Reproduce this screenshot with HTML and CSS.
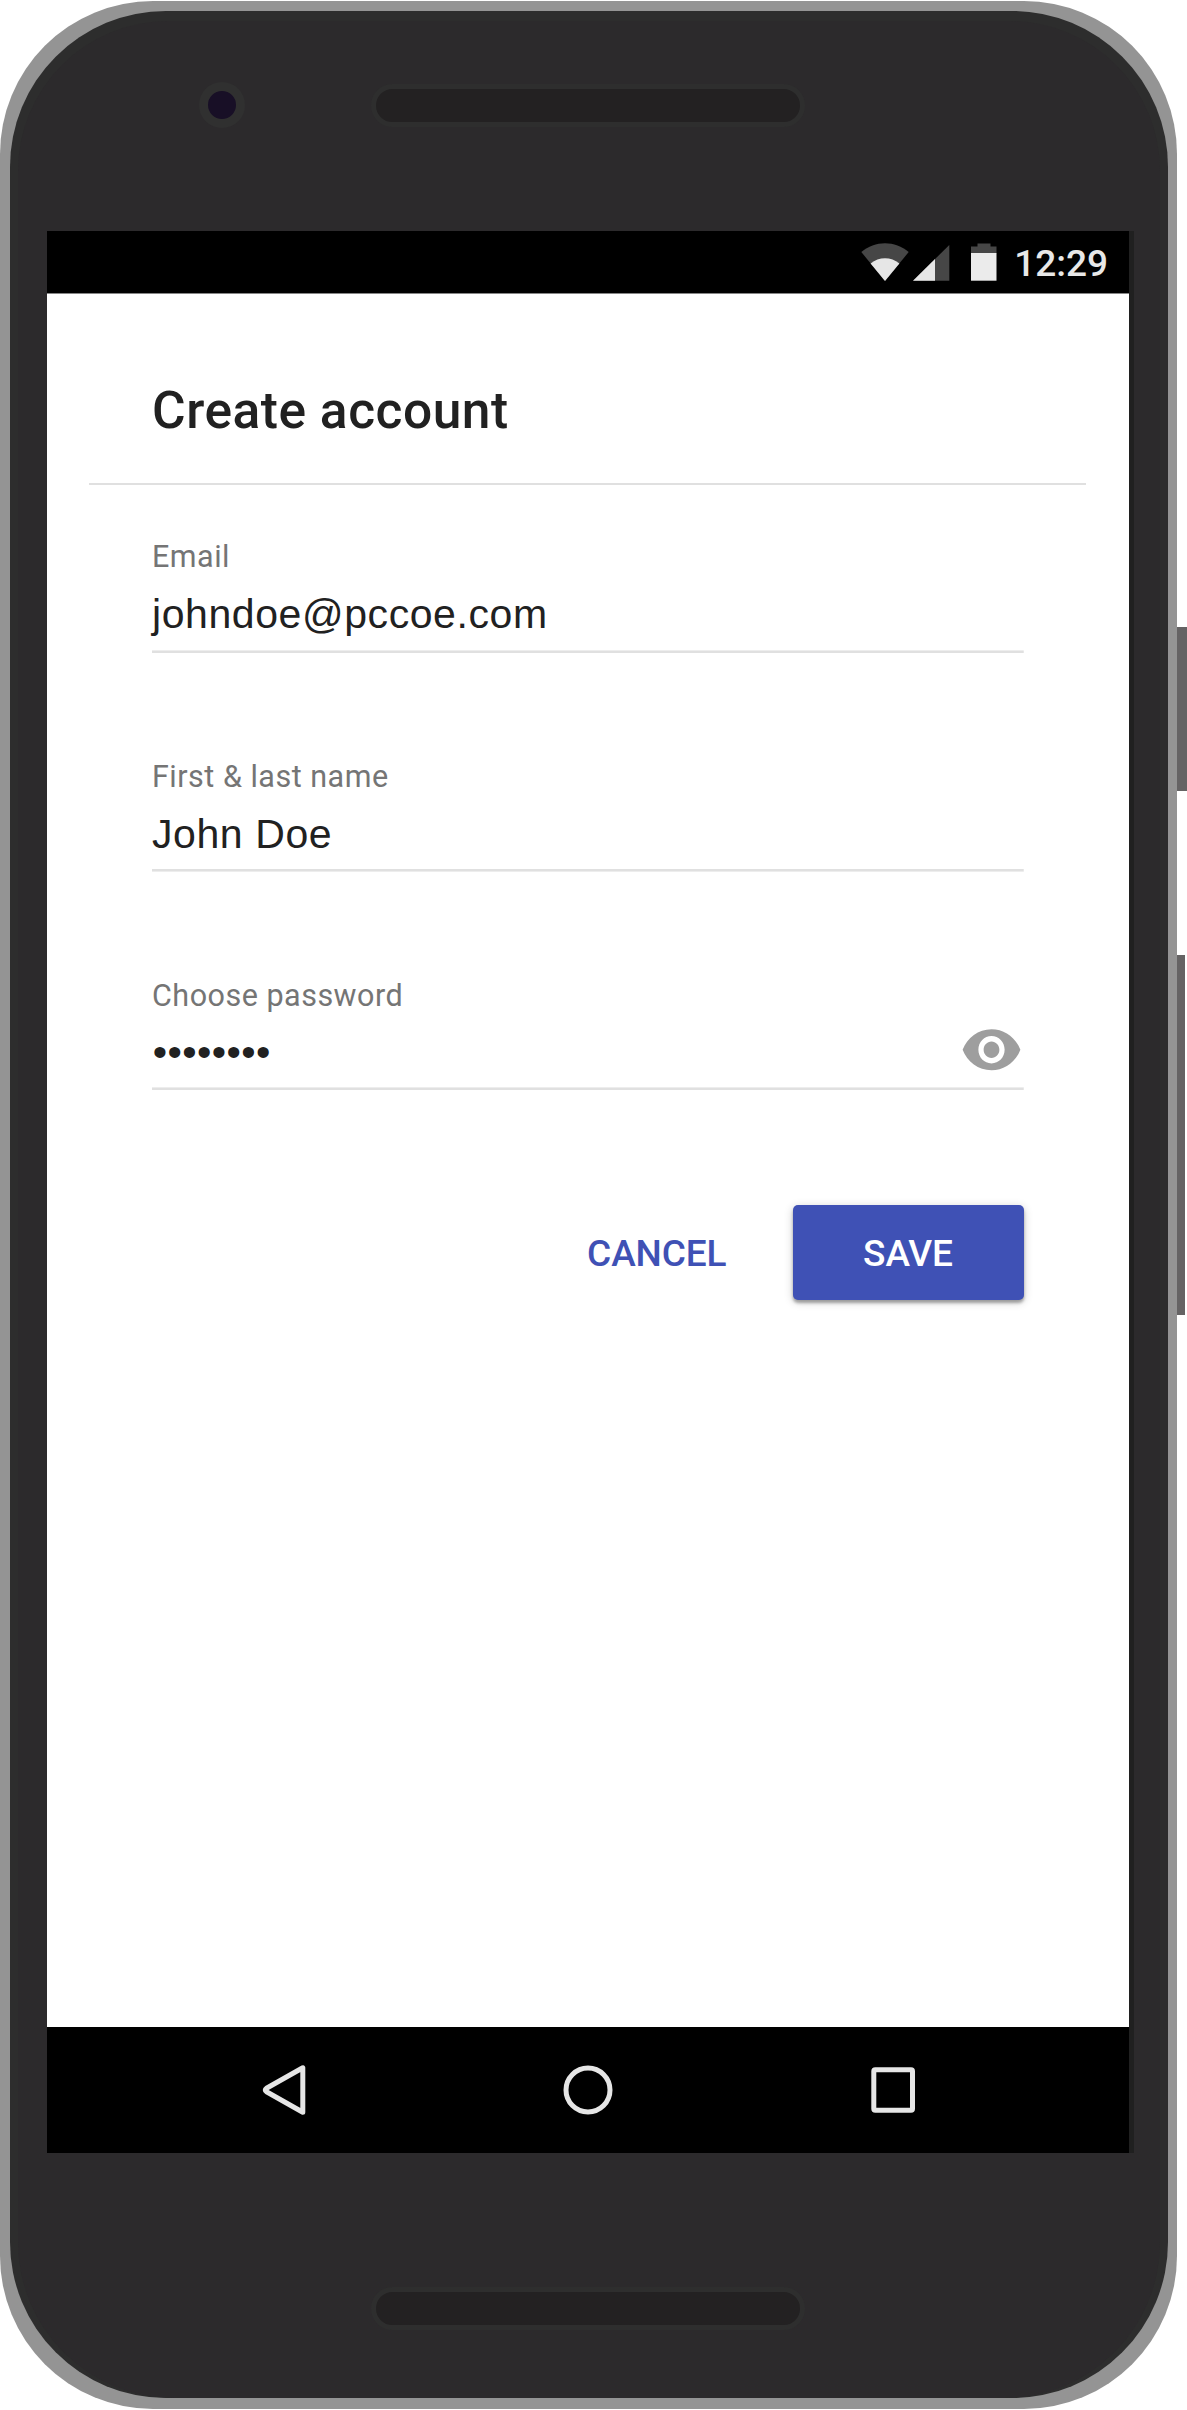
FILE: index.html
```
<!DOCTYPE html>
<html lang="en">
<head>
<meta charset="utf-8">
<title>Create account</title>
<link rel="stylesheet" href="styles.css">
</head>
<body>
<div class="phone">
  <div class="bezel">
    <div class="face">
      <div class="face-top">
        <span class="camera"></span>
        <span class="speaker"></span>
      </div>

      <div class="screen">
        <div class="statusbar">
          <svg class="status-icons" width="142" height="40" viewBox="0 0 142 40">
            <path fill="#464646" d="M24 38 L0.3 9 C14 -2.600 34 -2.600 47.700 9 Z"/>
            <path fill="#e6e6e6" d="M24 38 L9.600 20.400 C18 13.500 30 13.500 38.400 20.400 Z"/>
            <path fill="#464646" d="M88.300 2 V37.700 H52 Z"/>
            <path fill="#e6e6e6" d="M74 16 V37.700 H52 Z"/>
            <path fill="#464646" d="M116.500 0.500 h13 v3 h6 v7 h-25.500 v-7 h6.500 Z"/>
            <path fill="#ebebeb" d="M110 10 h25.500 v27.700 h-25.500 Z"/>
          </svg>
          <span class="clock">12:29</span>
        </div>

        <main class="app">
          <header class="app-header"><h1>Create account</h1></header>
          <form class="form">
            <div class="field">
              <label>Email</label>
              <div class="value">johndoe@pccoe.com</div>
            </div>
            <div class="field field-name">
              <label>First &amp; last name</label>
              <div class="value">John Doe</div>
            </div>
            <div class="field field-password">
              <label>Choose password</label>
              <div class="value">
                <span class="dots">••••••••</span>
                <svg class="eye" viewBox="0 0 24 24" preserveAspectRatio="none">
                  <path d="M12 4.500C7 4.500 2.730 7.610 1 12c1.730 4.390 6 7.500 11 7.500s9.270-3.110 11-7.500c-1.730-4.390-6-7.500-11-7.500zM12 17c-2.760 0-5-2.240-5-5s2.240-5 5-5 5 2.240 5 5-2.240 5-5 5zm0-8c-1.660 0-3 1.340-3 3s1.340 3 3 3 3-1.340 3-3-1.340-3-3-3z"/>
                </svg>
              </div>
            </div>
            <div class="actions">
              <span class="button">CANCEL</span>
              <span class="button button-raised">SAVE</span>
            </div>
          </form>
        </main>

        <nav class="navbar">
          <svg width="52" height="60" viewBox="0 0 52 60"><path d="M43.800 7.800 V52.200 L7.500 31.800 Q5 30 7.500 28.200 Z"/></svg>
          <svg width="60" height="60" viewBox="0 0 60 60"><circle cx="30" cy="30" r="22"/></svg>
          <svg width="52" height="60" viewBox="0 0 52 60"><rect x="6.800" y="9.800" width="38.700" height="40.400" rx="1.500"/></svg>
        </nav>
      </div>

      <div class="face-bottom"><span class="speaker"></span></div>
    </div>
  </div>
</div>
<div class="side">
  <span class="key power"></span>
  <span class="key volume"></span>
</div>
</body>
</html>
```
FILE: styles.css
```
* { box-sizing: border-box; }

body {
  margin: 0;
  width: 1187px;
  height: 2410px;
  display: flex;
  background: #fff;
  overflow: hidden;
  font-family: Roboto, sans-serif;
}

/* Device shell */
.phone {
  width: 1177px;
  height: 2408px;
  margin-top: 1px;
  padding: 9.5px 9px 11px 10px;
  border-radius: 153px;
  background: #949494;
}
.bezel {
  height: 100%;
  padding: 10px 8px 0;
  border-radius: 156px;
  background: #2d2d2d;
}
.face {
  height: 100%;
  border-radius: 150px 150px 156px 156px;
  background: #2c2a2c;
}
.face-top {
  height: 210.5px;
  display: flex;
  align-items: flex-start;
  padding: 61.5px 0 0 181px;
}
.camera {
  width: 46px;
  height: 46px;
  border: 9.5px solid #303030;
  border-radius: 50%;
  background: #180f26;
}
.speaker {
  width: 434px;
  height: 43px;
  border: 5px solid #2e2e2e;
  border-radius: 22px;
  background: #232122;
}
.face-top .speaker { margin: 2px 0 0 126px; }
.face-bottom { padding: 134px 0 0 353px; display: flex; }

.side { width: 10px; padding-top: 627px; display: flex; flex-direction: column; }
.key { background: #656364; }
.power { height: 164px; }
.volume { width: 7.5px; height: 360px; margin-top: 164px; }

/* Screen */
.screen {
  width: 1087px;
  height: 1922px;
  margin-left: 29px;
  border-right: 5px solid #202020;
  display: flex;
  flex-direction: column;
  background: #fff;
}
.statusbar {
  height: 62px;
  background: #000;
  display: flex;
  justify-content: flex-end;
  padding: 12px 21px 0 0;
}
.status-icons { margin-right: 11px; }
.clock {
  color: #e8e8e8;
  font-size: 37px;
  font-weight: 500;
  line-height: 42px;
}
.app { flex: 1; border-top: 1px solid #868686; }
.app-header {
  height: 191px;
  margin: 0 43px 0 42px;
  padding: 87px 0 0 63px;
  border-bottom: 2px solid #e0e0e0;
}
h1 {
  margin: 0;
  font-size: 51.5px;
  font-weight: 500;
  line-height: 60px;
  letter-spacing: 0.52px;
  color: #212121;
}

.form { padding: 54px 105.500px 0 105px; }
.field {
  height: 114px;
  margin-bottom: 105px;
  display: flex;
  flex-direction: column;
  gap: 15px;
  background: linear-gradient(#ededed 1px, #e0e0e0 1px) bottom / 100% 3px no-repeat;
}
.field-name {
  padding-top: 1px;
  background-image: linear-gradient(#e0e0e0 2px, #ededed 2px);
}
.field-password { height: 113px; margin-bottom: 0; padding-top: 1px; gap: 14px; }
.field label {
  font-size: 30.5px;
  line-height: 36px;
  letter-spacing: 0.5px;
  color: #757575;
}
.value {
  height: 48px;
  display: flex;
  align-items: center;
  justify-content: space-between;
  font: 41px/48px "Liberation Sans", Arial, sans-serif;
  letter-spacing: 0.58px;
  color: #212121;
}
.dots { letter-spacing: 0.4px; padding-left: 0.7px; }
.eye { width: 63px; height: 65.5px; margin: -4px 0.5px 0 0; fill: #9e9e9e; flex: none; }

.actions { display: flex; justify-content: flex-end; margin-top: 115px; gap: 66px; }
.button {
  height: 95px;
  line-height: 97px;
  font-size: 37px;
  font-weight: 500;
  letter-spacing: -0.1px;
  color: #3f51b5;
}
.button-raised {
  width: 231px;
  text-align: center;
  color: #fff;
  background: #3f51b5;
  border-radius: 5px;
  box-shadow: 0 3px 3px rgba(0, 0, 0, 0.3), 0 2px 10px rgba(0, 0, 0, 0.2);
}

.navbar {
  height: 126px;
  background: #000;
  display: flex;
  align-items: center;
  padding-left: 212px;
}
.navbar svg { fill: none; stroke: #e6e6e6; stroke-width: 5; stroke-linejoin: round; }
.navbar svg:nth-child(2) { margin-left: 247px; }
.navbar svg:nth-child(3) { margin-left: 249px; }
```
